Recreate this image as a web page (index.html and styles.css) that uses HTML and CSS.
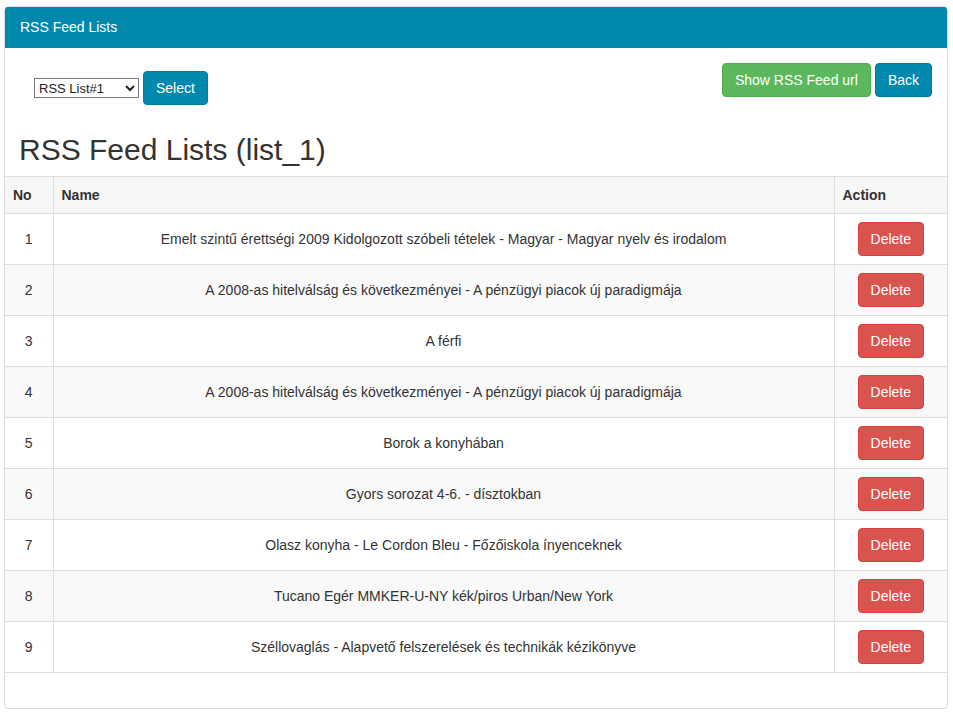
FILE: index.html
```html
<!DOCTYPE html>
<html>
<head>
    <meta charset="UTF-8">
    <title>RSS Feed Lists</title>
    <link rel="stylesheet" href="styles.css">
</head>
<body>
    <div class="panel">
        <div class="panel-heading">RSS Feed Lists</div>

        <div class="panel-body">
            <div class="toolbar">
                <form class="list-picker">
                    <select name="list">
                        <option selected>RSS List#1</option>
                        <option>RSS List#2</option>
                        <option>RSS List#3</option>
                    </select>
                    <button type="button" class="btn btn-teal">Select</button>
                </form>
                <div class="toolbar-actions">
                    <button type="button" class="btn btn-green">Show RSS Feed url</button>
                    <button type="button" class="btn btn-teal">Back</button>
                </div>
            </div>
            <h2 class="list-title">RSS Feed Lists (list_1)</h2>
        </div>

        <table class="feed-table">
            <thead>
                <tr>
                    <th class="col-no">No</th>
                    <th>Name</th>
                    <th class="col-action">Action</th>
                </tr>
            </thead>
            <tbody id="feed-rows"></tbody>
        </table>

        <div class="panel-footer"></div>
    </div>

    <script>
        const feeds = [
            'Emelt szintű érettségi 2009 Kidolgozott szóbeli tételek - Magyar - Magyar nyelv és irodalom',
            'A 2008-as hitelválság és következményei - A pénzügyi piacok új paradigmája',
            'A férfi',
            'A 2008-as hitelválság és következményei - A pénzügyi piacok új paradigmája',
            'Borok a konyhában',
            'Gyors sorozat 4-6. - dísztokban',
            'Olasz konyha - Le Cordon Bleu - Főzőiskola ínyenceknek',
            'Tucano Egér MMKER-U-NY kék/piros Urban/New York',
            'Széllovaglás - Alapvető felszerelések és technikák kézikönyve'
        ];

        const rows = document.getElementById('feed-rows');
        feeds.forEach((name, index) => {
            const tr = document.createElement('tr');
            tr.innerHTML = `
                <td class="no">${index + 1}</td>
                <td class="name">${name}</td>
                <td class="action"><button type="button" class="btn btn-red">Delete</button></td>
            `;
            rows.appendChild(tr);
        });
    </script>
</body>
</html>
```

FILE: styles.css
```css
* {
    box-sizing: border-box;
}

body {
    margin: 0;
    padding: 6px 5px 0 4px;
    font-family: 'Liberation Sans', Arial, sans-serif;
    font-size: 14px;
    line-height: 20px;
    color: #333;
    background: #fff;
}

.panel {
    border: 1px solid #ddd;
    border-radius: 4px;
    box-shadow: 0 1px 1px rgba(0, 0, 0, 0.05);
    overflow: hidden;
}

.panel-heading {
    background-color: #0089ad;
    color: #fff;
    padding: 10px 15px;
    border-bottom: 1px solid #0089ad;
}

.panel-body {
    padding: 15px 15px 0;
}

.toolbar {
    display: flex;
    justify-content: space-between;
    align-items: flex-start;
}

.list-picker {
    display: flex;
    align-items: center;
    gap: 4px;
    margin: 8px 0 0 14px;
}

.list-picker select {
    width: 105px;
    height: 20px;
    font-family: 'Liberation Sans', Arial, sans-serif;
    font-size: 13px;
    color: #222;
    border: 1px solid #767676;
    background: #fff;
}

.toolbar-actions {
    display: flex;
    gap: 4px;
}

.btn {
    display: inline-block;
    padding: 6px 12px;
    font-family: inherit;
    font-size: 14px;
    line-height: 20px;
    color: #fff;
    border: 1px solid transparent;
    border-radius: 4px;
    cursor: pointer;
    white-space: nowrap;
}

.btn-teal {
    background-color: #0089ad;
    border-color: #007a9b;
}

.btn-green {
    background-color: #5cb85c;
    border-color: #4cae4c;
}

.btn-red {
    background-color: #d9534f;
    border-color: #d43f3a;
}

.list-title {
    margin: 28px 0 10px -1px;
    font-size: 30px;
    font-weight: 500;
    line-height: 33px;
}

.feed-table {
    width: 100%;
    border-collapse: collapse;
    table-layout: fixed;
}

.feed-table th,
.feed-table td {
    padding: 8px;
    border: 1px solid #ddd;
    vertical-align: middle;
}

.feed-table tr > :first-child {
    border-left: 0;
}

.feed-table tr > :last-child {
    border-right: 0;
}

.feed-table th {
    text-align: left;
    font-weight: bold;
    background-color: #f7f7f7;
}

.feed-table .col-no {
    width: 48px;
}

.feed-table .col-action {
    width: 113px;
}

.feed-table tbody tr:nth-child(even) {
    background-color: #f9f9f9;
}

.feed-table td.no,
.feed-table td.name,
.feed-table td.action {
    text-align: center;
}

.panel-footer {
    height: 35px;
}
```
